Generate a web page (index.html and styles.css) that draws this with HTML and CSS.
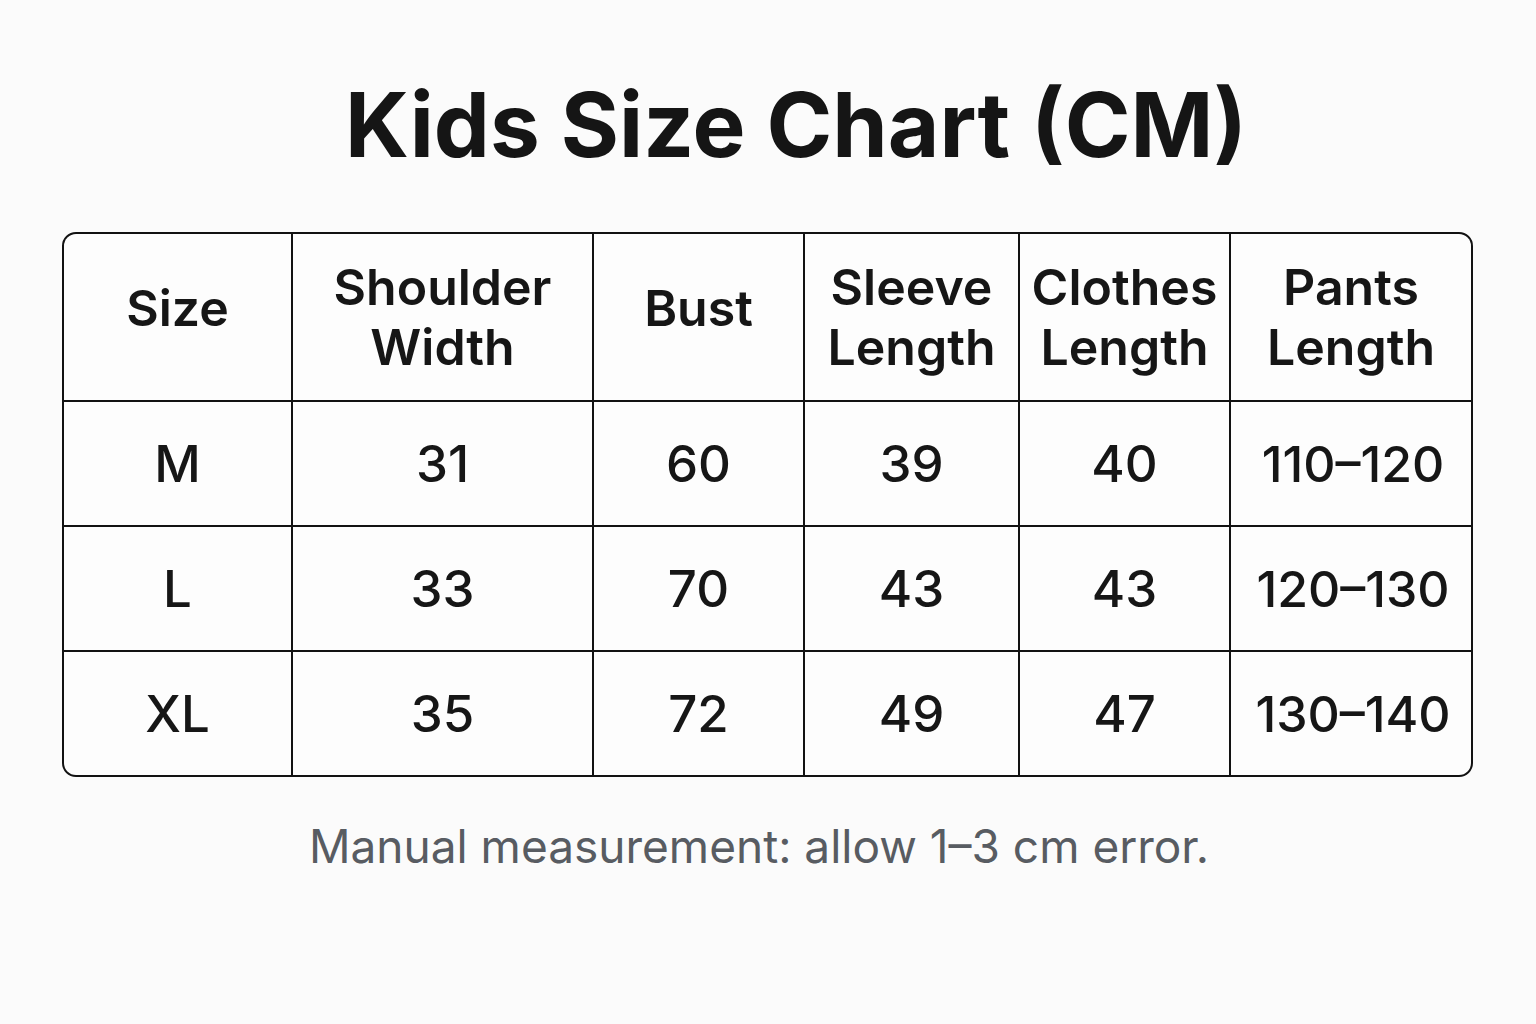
FILE: index.html
```html
<!DOCTYPE html>
<html lang="en">
<head>
<meta charset="utf-8">
<title>Kids Size Chart (CM)</title>
<link rel="stylesheet" href="styles.css">
</head>
<body>
<main class="page">
  <h1 class="title">Kids Size Chart (CM)</h1>
  <div class="chart">
    <div class="cell head single">Size</div>
    <div class="cell head">Shoulder<br>Width</div>
    <div class="cell head single">Bust</div>
    <div class="cell head">Sleeve<br>Length</div>
    <div class="cell head">Clothes<br>Length</div>
    <div class="cell head">Pants<br>Length</div>

    <div class="cell">M</div>
    <div class="cell">31</div>
    <div class="cell">60</div>
    <div class="cell">39</div>
    <div class="cell">40</div>
    <div class="cell range">110–120</div>

    <div class="cell">L</div>
    <div class="cell">33</div>
    <div class="cell">70</div>
    <div class="cell">43</div>
    <div class="cell">43</div>
    <div class="cell range">120–130</div>

    <div class="cell">XL</div>
    <div class="cell">35</div>
    <div class="cell">72</div>
    <div class="cell">49</div>
    <div class="cell">47</div>
    <div class="cell range">130–140</div>
  </div>
  <p class="note">Manual measurement: allow 1–3 cm error.</p>
</main>
</body>
</html>
```

FILE: styles.css
```css
html, body {
  margin: 0;
  padding: 0;
  background: #fbfbfb;
}

body {
  font-family: Inter, "Noto Sans", "Liberation Sans", sans-serif;
  color: #161616;
  width: 1536px;
  height: 1024px;
  overflow: hidden;
}

.page {
  display: flex;
  flex-direction: column;
  align-items: flex-start;
  padding-top: 72px;
}

.title {
  margin: 0;
  align-self: stretch;
  text-align: center;
  padding-left: 56px;
  font-size: 89px;
  line-height: 106px;
  font-weight: 700;
  color: #151515;
}

.chart {
  margin: 54px 0 0 62px;
  display: grid;
  grid-template-columns: 227px 299px 209px 213px 209px 240px;
  grid-template-rows: 166px 123px 123px 123px;
  gap: 2px;
  background: #121212;
  border: 2px solid #121212;
  border-radius: 14px;
  overflow: hidden;
}

.cell {
  background: #fdfdfd;
  display: flex;
  align-items: center;
  justify-content: center;
  text-align: center;
  font-size: 51px;
  font-weight: 500;
  line-height: 60px;
  color: #161616;
}

.cell.range {
  font-size: 50px;
  padding-left: 4px;
}

.cell.head {
  font-size: 50px;
  font-weight: 600;
  line-height: 60px;
}

.cell.head.single {
  padding-bottom: 18px;
}

.note {
  align-self: stretch;
  margin: 41px 0 0;
  text-align: center;
  padding-right: 18px;
  font-size: 46px;
  font-weight: 400;
  color: #585c62;
}
```
